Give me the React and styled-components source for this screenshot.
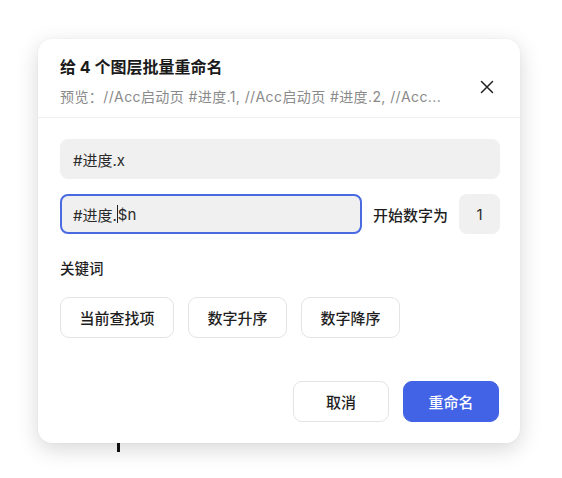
import React from 'react';
import styled, { createGlobalStyle } from 'styled-components';

const GlobalStyle = createGlobalStyle`
  html, body {
    margin: 0;
    padding: 0;
    background: #ffffff;
  }
  body {
    font-family: Inter, "Noto Sans CJK SC", sans-serif;
    color: #1f1f1f;
  }
`;

const Page = styled.div`
  position: relative;
  width: 562px;
  height: 478px;
  padding: 39px 0 0 38px;
  box-sizing: border-box;
`;

// a bit of the canvas behind the dialog peeking out
const Backdrop = styled.div`
  position: absolute;
  left: 117px;
  top: 440px;
  width: 3px;
  height: 12px;
  background: #111;
`;

const Dialog = styled.div`
  position: relative;
  width: 482px;
  height: 404px;
  background: #fff;
  border-radius: 14px;
  box-shadow: 0 6px 22px rgba(0, 0, 0, 0.16), 0 0 2px rgba(0, 0, 0, 0.06);
  display: flex;
  flex-direction: column;
  box-sizing: border-box;
`;

const Header = styled.div`
  display: flex;
  align-items: center;
  justify-content: space-between;
  padding: 17px 22px 0 22px;
  height: 79px;
  box-sizing: border-box;
  border-bottom: 1px solid #f0f0f0;
`;

const HeaderText = styled.div`
  display: flex;
  flex-direction: column;
  gap: 9px;
  align-self: flex-start;
`;

const Title = styled.div`
  font-size: 16px;
  font-weight: 700;
  line-height: 22px;
  color: #1a1a1a;
`;

const Preview = styled.div`
  font-size: 14px;
  line-height: 20px;
  letter-spacing: 0.4px;
  color: #8a8a8a;
  white-space: nowrap;
`;

const CloseButton = styled.button`
  border: 0;
  background: none;
  padding: 0;
  width: 24px;
  height: 24px;
  margin-right: -1px;
  display: flex;
  align-items: center;
  justify-content: center;
  color: #222;
  cursor: pointer;
`;

const Body = styled.div`
  flex: 1;
  display: flex;
  flex-direction: column;
  padding: 21px 20px 21px 22px;
`;

const Field = styled.div`
  height: 40px;
  box-sizing: border-box;
  border-radius: 8px;
  background: #f0f0f0;
  border: 2px solid ${(p) => (p.$focused ? '#4a6ae2' : '#f0f0f0')};
  display: flex;
  align-items: center;
  padding: 0 11px;
  font-size: 15px;
  color: #2a2a2a;
  flex: ${(p) => (p.$grow ? 1 : 'none')};
  width: ${(p) => p.$width || 'auto'};
  justify-content: ${(p) => (p.$center ? 'center' : 'flex-start')};
`;

const Caret = styled.span`
  display: inline-block;
  width: 1px;
  height: 18px;
  background: #222;
  vertical-align: middle;
`;

const Row = styled.div`
  display: flex;
  align-items: center;
  margin-top: 15px;
`;

const Label = styled.div`
  font-size: 15px;
  font-weight: 500;
  color: #1f1f1f;
  margin: 0 11px 0 11px;
`;

const SectionLabel = styled.div`
  font-size: 14.5px;
  font-weight: 500;
  line-height: 20px;
  margin-top: 25px;
`;

const Chips = styled.div`
  display: flex;
  gap: 14px;
  margin-top: 18px;
`;

const Chip = styled.button`
  height: 41px;
  padding: 0 18.5px;
  border: 1px solid #e4e4e4;
  border-radius: 9px;
  background: #fff;
  font-family: inherit;
  font-size: 15px;
  font-weight: 500;
  color: #1f1f1f;
  cursor: pointer;
`;

const Footer = styled.div`
  margin-top: auto;
  display: flex;
  justify-content: flex-end;
  gap: 14px;
  padding-right: 1px;
`;

const ActionButton = styled.button`
  width: 96px;
  height: 41px;
  border-radius: 9px;
  font-family: inherit;
  font-size: 15px;
  font-weight: 500;
  cursor: pointer;
  border: 1px solid ${(p) => (p.$primary ? '#4263e6' : '#e4e4e4')};
  background: ${(p) => (p.$primary ? '#4263e6' : '#fff')};
  color: ${(p) => (p.$primary ? '#fff' : '#1f1f1f')};
`;

const keywords = ['当前查找项', '数字升序', '数字降序'];

export default function App() {
  return (
    <>
      <GlobalStyle />
      <Page>
        <Backdrop />
        <Dialog>
          <Header>
            <HeaderText>
              <Title>给 4 个图层批量重命名</Title>
              <Preview>预览：//Acc启动页 #进度.1, //Acc启动页 #进度.2, //Acc...</Preview>
            </HeaderText>
            <CloseButton aria-label="关闭">
              <svg width="14" height="14" viewBox="0 0 14 14" fill="none">
                <path d="M1.5 1.5L12.5 12.5M12.5 1.5L1.5 12.5" stroke="currentColor" strokeWidth="1.5" strokeLinecap="round" />
              </svg>
            </CloseButton>
          </Header>
          <Body>
            <Field>#进度.x</Field>
            <Row>
              <Field $focused $grow>
                #进度.<Caret />$n
              </Field>
              <Label>开始数字为</Label>
              <Field $width="41px" $center>1</Field>
            </Row>
            <SectionLabel>关键词</SectionLabel>
            <Chips>
              {keywords.map((k) => (
                <Chip key={k}>{k}</Chip>
              ))}
            </Chips>
            <Footer>
              <ActionButton>取消</ActionButton>
              <ActionButton $primary>重命名</ActionButton>
            </Footer>
          </Body>
        </Dialog>
      </Page>
    </>
  );
}
